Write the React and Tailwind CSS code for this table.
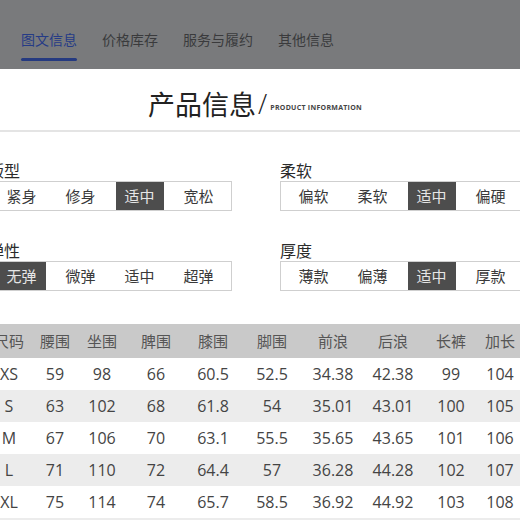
import React from 'react';

const cjk = { fontFamily: '"Noto Sans CJK SC", "Noto Sans", sans-serif' };
const num = { fontFamily: '"Open Sans", "Noto Sans CJK SC", sans-serif' };

const tabs = ['图文信息', '价格库存', '服务与履约', '其他信息'];

const options = [
  [
    { label: '版型', items: ['紧身', '修身', '适中', '宽松'], active: 2 },
    { label: '柔软', items: ['偏软', '柔软', '适中', '偏硬'], active: 2 },
  ],
  [
    { label: '弹性', items: ['无弹', '微弹', '适中', '超弹'], active: 0 },
    { label: '厚度', items: ['薄款', '偏薄', '适中', '厚款'], active: 2 },
  ],
];

const headers = ['尺码', '腰围', '坐围', '脾围', '膝围', '脚围', '前浪', '后浪', '长裤', '加长'];
const rows = [
  ['XS', '59', '98', '66', '60.5', '52.5', '34.38', '42.38', '99', '104'],
  ['S', '63', '102', '68', '61.8', '54', '35.01', '43.01', '100', '105'],
  ['M', '67', '106', '70', '63.1', '55.5', '35.65', '43.65', '101', '106'],
  ['L', '71', '110', '72', '64.4', '57', '36.28', '44.28', '102', '107'],
  ['XL', '75', '114', '74', '65.7', '58.5', '36.92', '44.92', '103', '108'],
];

const cols = 'grid grid-cols-[48px_44px_50px_58px_56px_62px_60px_60px_56px_42px]';

const OptionGroup = ({ label, items, active }) => (
  <div className="w-[244px] shrink-0">
    <div className="h-5 text-[16px] leading-5 text-[#2b2b2b]">{label}</div>
    <div className="mt-px flex h-[30px] border border-[#cfcfcf] px-[3px]">
      {items.map((it, i) => (
        <div key={it} className="flex w-[59px] justify-center">
          <div
            className={`flex h-full w-[48px] items-center justify-center text-[15px] ${
              i === active ? 'bg-[#4d4d4d] text-[#e6e6e6]' : 'text-[#3a3a3a]'
            }`}
          >
            {it}
          </div>
        </div>
      ))}
    </div>
  </div>
);

export default function App() {
  return (
    <div className="h-[520px] w-[520px] overflow-hidden bg-white" style={cjk}>
      {/* tab bar */}
      <div className="h-[69px] bg-[#797a7c]">
        <div className="flex gap-[25px] pl-[21px] pt-[29px]">
          {tabs.map((t, i) => (
            <div key={t} className="flex flex-col">
              <span className={`text-[14px] leading-5 ${i === 0 ? 'text-[#253b86]' : 'text-[#3a3a3c]'}`}>{t}</span>
              {i === 0 && <div className="mt-[9px] h-[3px] w-[56px] rounded-full bg-[#253a80]" />}
            </div>
          ))}
        </div>
      </div>

      {/* title */}
      <div className="flex h-[61px] items-center pl-[148px] pt-[7px]">
        <span className="text-[27px] leading-none text-[#222]">产品信息</span>
        <span className="ml-[2px] text-[27px] font-light leading-none text-[#222]" style={num}>/</span>
        <span className="ml-[3px] mt-[10px] text-[7px] font-bold tracking-[0.04em] text-[#444]" style={num}>
          PRODUCT INFORMATION
        </span>
      </div>
      <div className="h-[2px] bg-[#e4e4e4]" />

      {/* options */}
      <div className="ml-[-12px] flex flex-col gap-[29px] pt-[28px]">
        {options.map((row, r) => (
          <div key={r} className="flex gap-[48px]">
            {row.map((g) => (
              <OptionGroup key={g.label} {...g} />
            ))}
          </div>
        ))}
      </div>

      {/* size table */}
      <div className="ml-[-15px] mt-[33px] w-[536px]">
        <div className={`${cols} h-[34px] items-center bg-[#c9c9c9] text-[15px] text-[#555]`}>
          {headers.map((h) => (
            <div key={h} className="text-center">{h}</div>
          ))}
        </div>
        {rows.map((r, i) => (
          <div
            key={r[0]}
            className={`${cols} h-[32px] items-center text-[16px] text-[#444] ${i % 2 ? 'bg-[#ececec]' : 'bg-white'}`}
            style={num}
          >
            {r.map((c, j) => (
              <div key={j} className="text-center">{c}</div>
            ))}
          </div>
        ))}
        <div className="h-[10px] bg-[#ececec]" />
      </div>
    </div>
  );
}
